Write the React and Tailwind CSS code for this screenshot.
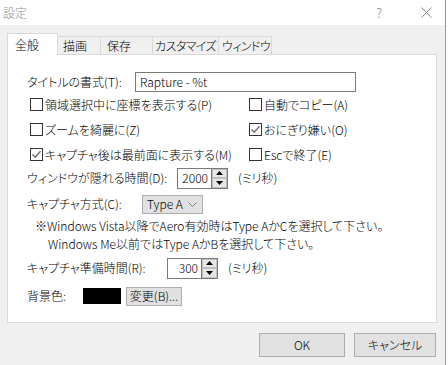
import React from "react";

const FONT = { fontFamily: '"Noto Sans CJK JP", "Noto Sans", sans-serif' };

function Check({ checked }) {
  return (
    <span className="w-[13px] h-[13px] border border-[#333333] bg-white flex items-center justify-center shrink-0">
      {checked && (
        <svg width="11" height="11" viewBox="0 0 11 11">
          <polyline points="1.5,5.5 4.2,8.2 9.5,2.2" fill="none" stroke="#6b6b6b" strokeWidth="1.3" />
        </svg>
      )}
    </span>
  );
}

function CB({ checked, label }) {
  return (
    <div className="flex items-center gap-[2px] h-[25px]">
      <Check checked={checked} />
      <span className="whitespace-nowrap">{label}</span>
    </div>
  );
}

function Spin({ value, inputW }) {
  return (
    <div className="flex h-[21px]">
      <div
        className="h-full border border-[#7a7a7a] bg-white flex items-center justify-end pr-[3px]"
        style={{ width: inputW }}
      >
        {value}
      </div>
      <div className="w-[16px] h-full flex flex-col border-y border-r border-[#7a7a7a] bg-[#f0f0f0]">
        <div className="flex-1 flex items-center justify-center border border-[#bfbfbf] bg-[#e6e6e6]">
          <svg width="7" height="4" viewBox="0 0 7 4"><polygon points="3.5,0 7,4 0,4" fill="#000" /></svg>
        </div>
        <div className="flex-1 flex items-center justify-center border border-[#bfbfbf] bg-[#e6e6e6]">
          <svg width="7" height="4" viewBox="0 0 7 4"><polygon points="0,0 7,0 3.5,4" fill="#000" /></svg>
        </div>
      </div>
    </div>
  );
}

export default function App() {
  return (
    <div
      className="w-[448px] h-[365px] bg-white text-[12px] font-light text-black leading-none flex [font-feature-settings:'palt']"
      style={FONT}
    >
      <div className="w-[446px] h-[365px] bg-[#f0f0f0] border-r border-[#9a9a9a] flex flex-col">
        {/* title bar */}
        <div className="h-[25px] bg-white flex items-center shrink-0">
          <span className="pl-[3px] text-[#8c8c8c]">設定</span>
          <span className="ml-auto text-[#8c8c8c] text-[13px] mr-[39px]">?</span>
          <svg width="11" height="11" viewBox="0 0 11 11" className="mr-[13px]">
            <line x1="0.5" y1="0.5" x2="10.5" y2="10.5" stroke="#8c8c8c" strokeWidth="1" />
            <line x1="10.5" y1="0.5" x2="0.5" y2="10.5" stroke="#8c8c8c" strokeWidth="1" />
          </svg>
        </div>

        <div className="pl-[7px] pr-[8px] pt-[8px] flex flex-col">
          {/* tabs */}
          <div className="flex items-end h-[21px] relative z-10">
            <div className="h-[22px] -mb-px w-[51px] bg-white border-l border-t border-r border-[#d9d9d9] flex items-start pt-[5px] pl-[7px]">
              全般
            </div>
            <div className="h-[18px] w-[43px] border-t border-r border-[#d9d9d9] flex items-center pl-[5px]">描画</div>
            <div className="h-[18px] w-[52px] border-t border-r border-[#d9d9d9] flex items-center pl-[6px]">保存</div>
            <div className="h-[18px] w-[66px] border-t border-r border-[#d9d9d9] flex items-center pl-[2px] whitespace-nowrap tracking-[-0.6px]">カスタマイズ</div>
            <div className="h-[18px] w-[53px] border-t border-r border-[#d9d9d9] flex items-center pl-[3px] whitespace-nowrap tracking-[-0.6px]">ウィンドウ</div>
          </div>

          {/* panel */}
          <div className="h-[269px] bg-white border border-[#d9d9d9] pt-[16px] flex flex-col">
            <div className="flex items-center h-[21px] pl-[19px]">
              <span className="w-[108px] whitespace-nowrap">タイトルの書式(T):</span>
              <div className="w-[221px] h-[20px] border border-[#7a7a7a] flex items-center pl-[4px]">Rapture - %t</div>
            </div>

            <div className="grid grid-cols-[219px_1fr] pl-[22px]">
              <CB checked={false} label="領域選択中に座標を表示する(P)" />
              <CB checked={false} label="自動でコピー(A)" />
              <CB checked={false} label="ズームを綺麗に(Z)" />
              <CB checked={true} label="おにぎり嫌い(O)" />
              <CB checked={true} label="キャプチャ後は最前面に表示する(M)" />
              <CB checked={false} label="Escで終了(E)" />
            </div>

            <div className="flex items-center h-[22px] pl-[19px]">
              <span className="w-[150px] whitespace-nowrap">ウィンドウが隠れる時間(D):</span>
              <Spin value="2000" inputW={35} />
              <span className="ml-[10px]">(ミリ秒)</span>
            </div>

            <div className="flex items-center h-[22px] mt-[4px] pl-[19px]">
              <span className="w-[115px] whitespace-nowrap">キャプチャ方式(C):</span>
              <div className="w-[61px] h-[19px] bg-[#e1e1e1] border border-[#adadad] flex items-center pl-[4px] pr-[5px]">
                <span>Type A</span>
                <svg width="9" height="5" viewBox="0 0 9 5" className="ml-auto">
                  <polyline points="0.5,0.5 4.5,4.5 8.5,0.5" fill="none" stroke="#7a7a7a" strokeWidth="1" />
                </svg>
              </div>
            </div>

            <div className="mt-[2px] flex flex-col whitespace-nowrap">
              <div className="h-[18px] flex items-center pl-[27px]">※Windows Vista以降でAero有効時はType AかCを選択して下さい。</div>
              <div className="h-[18px] flex items-center pl-[40px]">Windows Me以前ではType AかBを選択して下さい。</div>
            </div>

            <div className="flex items-center h-[22px] mt-[4px] pl-[19px]">
              <span className="w-[140px] whitespace-nowrap">キャプチャ準備時間(R):</span>
              <Spin value="300" inputW={35} />
              <span className="ml-[10px]">(ミリ秒)</span>
            </div>

            <div className="flex items-center h-[22px] mt-[6px] pl-[19px]">
              <span className="w-[56px]">背景色:</span>
              <div className="w-[38px] h-[16px] bg-black" />
              <div className="ml-[5px] w-[56px] h-[19px] bg-[#e1e1e1] border border-[#adadad] flex items-center justify-center whitespace-nowrap">
                変更(B)...
              </div>
            </div>
          </div>

          {/* footer */}
          <div className="flex justify-end gap-[9px] mt-[10px] pr-[1px]">
            <div className="w-[86px] h-[24px] bg-[#e1e1e1] border border-[#adadad] flex items-center justify-center">OK</div>
            <div className="w-[82px] h-[24px] bg-[#e1e1e1] border border-[#adadad] flex items-center justify-center">キャンセル</div>
          </div>
        </div>
      </div>
    </div>
  );
}
